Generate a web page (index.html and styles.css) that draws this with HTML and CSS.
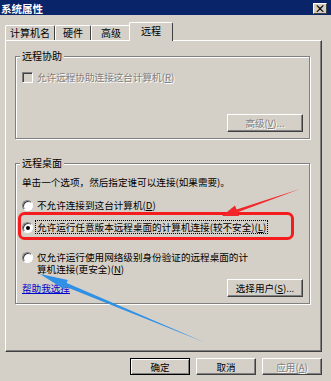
FILE: index.html
```html
<!doctype html>
<html lang="zh-CN">
    <head>
        <meta charset="UTF-8" />
        <title>系统属性</title>
        <link rel="stylesheet" href="styles.css">
    </head>
    <body>
        <div class="window">
            <div class="titlebar">
                <span class="title">系统属性</span>
                <span class="close">×</span>
            </div>

            <div class="tabs">
                <div class="tab tab-name">计算机名</div>
                <div class="tab tab-hw">硬件</div>
                <div class="tab tab-adv">高级</div>
                <div class="tab active">远程</div>
            </div>

            <div class="panel">
                <div class="group assist">
                    <div class="group-title">远程协助</div>
                    <div class="row check-row disabled">
                        <span class="checkbox"></span>
                        <span>允许远程协助连接这台计算机(<u>R</u>)</span>
                    </div>
                    <button class="btn btn-side disabled">高级(<u>V</u>)...</button>
                </div>

                <div class="group desktop">
                    <div class="group-title">远程桌面</div>
                    <p class="hint">单击一个选项，然后指定谁可以连接(如果需要)。</p>
                    <div class="row radio-row first">
                        <span class="radio"></span>
                        <span>不允许连接到这台计算机(<u>D</u>)</span>
                    </div>
                    <div class="row radio-row second">
                        <span class="radio checked"></span>
                        <span class="focus">允许运行任意版本远程桌面的计算机连接(较不安全)(<u>L</u>)</span>
                    </div>
                    <div class="row radio-row third">
                        <span class="radio"></span>
                        <span class="two-line">仅允许运行使用网络级别身份验证的远程桌面的计<br>算机连接(更安全)(<u>N</u>)</span>
                    </div>
                    <div class="row bottom-row">
                        <a class="help" href="#">帮助我选择</a>
                        <button class="btn btn-side">选择用户(<u>S</u>)...</button>
                    </div>
                </div>
            </div>

            <div class="actions">
                <button class="btn default">确定</button>
                <button class="btn">取消</button>
                <button class="btn disabled">应用(<u>A</u>)</button>
            </div>

            <!-- annotations drawn over the dialog -->
            <svg class="marks" width="331" height="381" viewBox="0 0 331 381">
                <rect x="19.5" y="213.5" width="273" height="25" rx="5" fill="none" stroke="#f41c1c" stroke-width="3"/>
                <polygon fill="#f2262a" points="222,216 239,216 237.6,212.2 300,189 236.6,209.4 235,205.5"/>
                <polygon fill="#2f90e6" points="40,274 64,289.3 65.1,286.5 205,342.5 66.7,282.9 67.8,280.1"/>
            </svg>
        </div>
    </body>
</html>
```

FILE: styles.css
```css
body {
    margin: 0;
    background: #d4d0c8;
    font-family: "Noto Sans CJK SC", "Noto Sans", sans-serif;
    font-size: 9.6px;
    color: #000;
}

.window {
    position: relative;
    width: 331px;
    height: 381px;
    overflow: hidden;
}

.titlebar {
    height: 15px;
    background: #0a246a;
    color: #fff;
    display: flex;
    align-items: flex-end;
    justify-content: space-between;
    padding: 0 4px 0 1px;
}

.title {
    font-weight: bold;
    font-size: 10.5px;
    line-height: 12px;
}

.close {
    width: 14px;
    height: 11px;
    margin-bottom: 1px;
    box-sizing: border-box;
    background: #d4d0c8;
    color: #000;
    border: 1px solid;
    border-color: #fff #404040 #404040 #fff;
    font-weight: bold;
    font-size: 11px;
    line-height: 8px;
    text-align: center;
}

.tabs {
    display: flex;
    align-items: flex-end;
    height: 18px;
    margin: 7px 0 0 5px;
}

.tab {
    height: 15px;
    box-sizing: border-box;
    border: 1px solid;
    border-color: #fff #404040 transparent #fff;
    border-bottom: 0;
    border-radius: 2px 2px 0 0;
    text-align: center;
    font-size: 10px;
    line-height: 14px;
}

.tab-name { width: 50px; }
.tab-hw { width: 36px; }
.tab-adv { width: 40px; }

.tab.active {
    position: relative;
    z-index: 1;
    width: 44px;
    height: 19px;
    margin: 0 0 -1px -2px;
    background: #d4d0c8;
    line-height: 16px;
}

.panel {
    margin: 0 9px 0 5px;
    height: 312px;
    box-sizing: border-box;
    border: 1px solid;
    border-color: #fff #404040 #404040 #fff;
    box-shadow: inset -1px -1px #808080;
    padding: 15px 11px 0 9px;
}

.group {
    display: flex;
    flex-direction: column;
    box-sizing: border-box;
    border: 1px solid #808080;
    box-shadow: inset 1px 1px #fff, 1px 1px #fff;
    padding: 0 6px 6px 6px;
}

.group.assist { height: 83px; }

.group.desktop {
    height: 141px;
    margin-top: 24px;
}

.group-title {
    width: fit-content;
    margin: -7px 0 0 -2px;
    padding: 0 2px;
    background: #d4d0c8;
    font-size: 10px;
    line-height: 12px;
}

.row {
    display: flex;
    align-items: center;
    line-height: 12px;
}

.check-row { margin-top: 9px; }

.checkbox {
    width: 11px;
    height: 11px;
    margin-right: 4px;
    box-sizing: border-box;
    border: 1px solid;
    border-color: #808080 #fff #fff #808080;
    box-shadow: inset 1px 1px #404040, inset -1px -1px #d4d0c8;
    background: #d4d0c8;
}

.disabled {
    color: #808080;
    text-shadow: 1px 1px #fff;
}

.hint {
    margin: 7px 0 0;
    line-height: 12px;
}

.radio-row { align-items: flex-start; }
.radio-row.first { margin-top: 11px; }
.radio-row.second { margin-top: 10px; }
.radio-row.third { margin-top: 17px; }

.radio {
    position: relative;
    flex: none;
    width: 11px;
    height: 11px;
    margin: 1px 4px 0 0;
    box-sizing: border-box;
    border-radius: 50%;
    border: 1px solid;
    border-color: #808080 #fff #fff #808080;
    box-shadow: inset 1px 1px #404040;
    background: #fff;
}

.radio.checked::after {
    content: "";
    position: absolute;
    left: 3px;
    top: 3px;
    width: 4px;
    height: 4px;
    border-radius: 50%;
    background: #000;
}

.focus {
    margin: -1px 0 0 -2px;
    padding: 0 1px;
    border: 1px dotted #000;
}

.two-line { line-height: 12px; }

.bottom-row {
    justify-content: space-between;
    margin-top: auto;
}

.help {
    color: #0000cc;
    text-decoration: underline;
}

.btn {
    height: 18px;
    box-sizing: border-box;
    padding: 0;
    background: #d4d0c8;
    border: 1px solid;
    border-color: #fff #404040 #404040 #fff;
    box-shadow: inset -1px -1px #808080;
    font-family: inherit;
    font-size: 9.6px;
    line-height: 14px;
    color: #000;
}

.btn-side {
    align-self: flex-end;
    width: 76px;
    margin-top: auto;
}

.btn.disabled { color: #808080; }

.actions {
    display: flex;
    justify-content: flex-end;
    gap: 6px;
    margin-top: 6px;
    padding-right: 9px;
}

.actions .btn {
    width: 60px;
    height: 17px;
}

.actions .btn.default {
    border-color: #000;
    box-shadow: inset 1px 1px #fff, inset -1px -1px #808080;
}

.marks {
    position: absolute;
    left: 0;
    top: 0;
    pointer-events: none;
}
```
